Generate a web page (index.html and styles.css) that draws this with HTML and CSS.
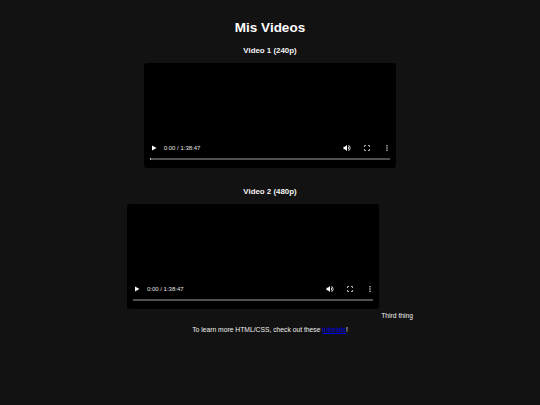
FILE: index.html
```html
<!DOCTYPE html>
<html lang="en">
<head>
    <meta charset="UTF-8">
    <meta name="viewport" content="width=device-width, initial-scale=1.0">
    <title>Mis Videos</title>
    <link rel="stylesheet" href="styles.css">
</head>
<body>
    <h1>Mis Videos</h1>

    <h3>Video 1 (240p)</h3>
    <div class="video-row">
        <div class="player">
            <div class="controls">
                <svg class="icon" viewBox="0 0 8 8"><path d="M2 1.500l4.500 2.500-4.500 2.500z"/></svg>
                <span class="time">0:00 / 1:38:47</span>
                <svg class="icon volume" viewBox="0 0 8 8"><path d="M0.5 2.8h1.4L4 1v6L1.900 5.200H.5z"/><path d="M5 2.300a2 2 0 0 1 0 3.400zM5.600 1a3.300 3.300 0 0 1 0 6l-.2-.7a2.600 2.600 0 0 0 0-4.600z"/></svg>
                <svg class="icon full" viewBox="0 0 8 8"><path d="M1.500 3V1.500h1.500M5 1.500h1.500V3M6.500 5v1.500H5M3 6.500H1.500V5" fill="none" stroke="#ddd" stroke-width=".8"/></svg>
                <svg class="icon more" viewBox="0 0 8 8"><circle cx="4" cy="1.800" r=".7"/><circle cx="4" cy="4" r=".7"/><circle cx="4" cy="6.200" r=".7"/></svg>
            </div>
            <div class="timeline started"></div>
        </div>
    </div>

    <h3>Video 2 (480p)</h3>
    <div class="video-row">
        <div class="player">
            <div class="controls">
                <svg class="icon" viewBox="0 0 8 8"><path d="M2 1.500l4.500 2.500-4.500 2.500z"/></svg>
                <span class="time">0:00 / 1:38:47</span>
                <svg class="icon volume" viewBox="0 0 8 8"><path d="M0.5 2.8h1.4L4 1v6L1.900 5.200H.5z"/><path d="M5 2.300a2 2 0 0 1 0 3.400zM5.600 1a3.300 3.300 0 0 1 0 6l-.2-.7a2.600 2.600 0 0 0 0-4.600z"/></svg>
                <svg class="icon full" viewBox="0 0 8 8"><path d="M1.500 3V1.500h1.500M5 1.500h1.500V3M6.500 5v1.500H5M3 6.500H1.500V5" fill="none" stroke="#ddd" stroke-width=".8"/></svg>
                <svg class="icon more" viewBox="0 0 8 8"><circle cx="4" cy="1.800" r=".7"/><circle cx="4" cy="4" r=".7"/><circle cx="4" cy="6.200" r=".7"/></svg>
            </div>
            <div class="timeline"></div>
        </div>
        Third thing
    </div>

    <p>To learn more HTML/CSS, check out these <a href="#">tutorials</a>!</p>
</body>
</html>
```

FILE: styles.css
```css
body {
    font-family: "Liberation Sans", Arial, sans-serif;
    margin: 0;
    padding: 0;
    background-color: #121212;
    color: #f0f0f0;
    text-align: center;
    font-size: 6.750px;
}
h1 {
    color: white;
    font-size: 13.500px;
    line-height: 16px;
    margin: 0 0 2.500px;
    padding-top: 20px;
}
h3 {
    color: #f4f4f4;
    font-size: 7.900px;
    line-height: 10px;
    margin: 0;
    padding-top: 7.500px;
}
.video-row {
    margin-top: 7px;
    line-height: 8px;
}
.player {
    display: inline-flex;
    flex-direction: column;
    justify-content: flex-end;
    box-sizing: border-box;
    width: 252.500px;
    height: 105px;
    margin-bottom: 11px;
    padding: 0 6.500px 8px;
    background-color: black;
    border-radius: 3px;
    vertical-align: bottom;
}
.controls {
    display: flex;
    align-items: center;
    height: 10px;
    margin-bottom: 5px;
}
.icon {
    width: 8px;
    height: 8px;
    fill: white;
}
.time {
    margin-left: 5.500px;
    margin-right: auto;
    font-size: 6px;
    color: #e4e4e4;
}
.full {
    margin-left: 12px;
}
.more {
    margin-left: 12px;
    margin-right: -1px;
}
.timeline {
    height: 2px;
    background-color: #505050;
}
.started {
    border-left: 1px solid #bbb;
}
p {
    margin: 0;
    padding-top: 6px;
    line-height: 8px;
}
a {
    color: #0000ee;
}
```
